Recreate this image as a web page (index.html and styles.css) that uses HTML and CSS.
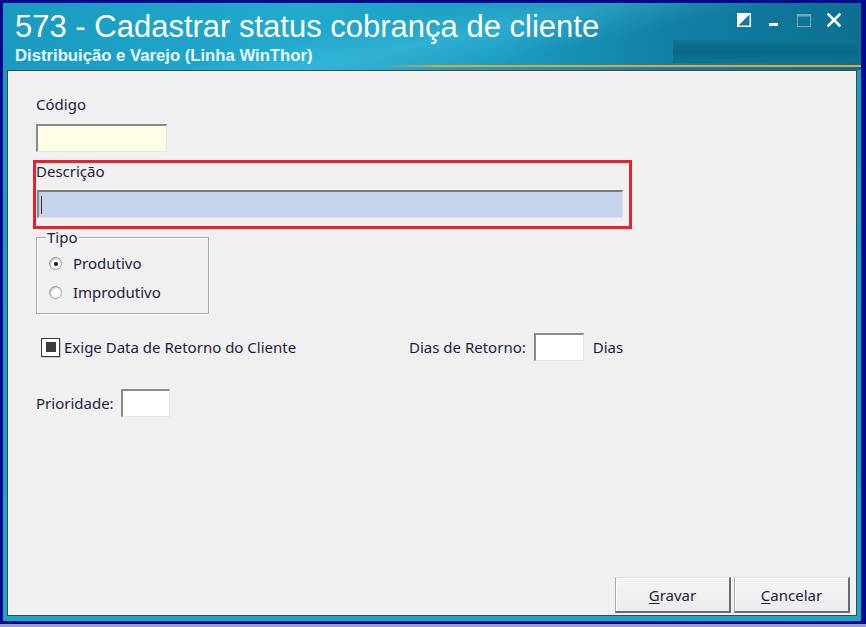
FILE: index.html
```html
<!DOCTYPE html>
<html lang="pt-BR">
<head>
  <meta charset="UTF-8" />
  <title>573 - Cadastrar status cobrança de cliente</title>
  <link rel="stylesheet" href="styles.css">
</head>
<body>

<div class="window">
  <header class="titlebar">
    <div class="titles">
      <h1>573 - Cadastrar status cobrança de cliente</h1>
      <div class="subtitle">Distribuição e Varejo (Linha WinThor)</div>
    </div>

    <div class="caption-buttons">
      <svg width="14" height="14" viewBox="0 0 14 14">
        <rect x="0.75" y="0.75" width="12.5" height="12.5" fill="none" stroke="#fff" stroke-width="1.5"/>
        <polygon points="0,0 14,0 0,14" fill="#fff"/>
      </svg>
      <svg width="14" height="14" viewBox="0 0 14 14">
        <rect x="2" y="10" width="9" height="3" fill="#fff"/>
      </svg>
      <svg width="14" height="14" viewBox="0 0 14 14">
        <rect x="0.5" y="1.5" width="13" height="12" fill="none" stroke="#7fa6b6" stroke-width="1"/>
        <rect x="0" y="1" width="14" height="2.5" fill="#7fa6b6"/>
      </svg>
      <svg width="14" height="14" viewBox="0 0 14 14">
        <path d="M1.5 1.5 L12.5 12.5 M12.5 1.5 L1.5 12.5" stroke="#fff" stroke-width="2.6" stroke-linecap="square"/>
      </svg>
    </div>

    <div class="title-shade"></div>
    <div class="title-line"></div>
  </header>

  <main class="panel">
    <div class="form">
      <label class="label">Código</label>
      <div class="field field-code"></div>

      <div class="highlight">
        <label class="label label-desc">Descrição</label>
        <div class="field field-desc"><span class="caret"></span></div>
      </div>

      <fieldset class="group">
        <legend>Tipo</legend>
        <div class="radio-row">
          <span class="radio checked"></span>
          <span>Produtivo</span>
        </div>
        <div class="radio-row">
          <span class="radio"></span>
          <span>Improdutivo</span>
        </div>
      </fieldset>

      <div class="row-return">
        <div class="check-row">
          <span class="check"></span>
          <span>Exige Data de Retorno do Cliente</span>
        </div>
        <div class="days">
          <span>Dias de Retorno:</span>
          <div class="field field-small"></div>
          <span>Dias</span>
        </div>
      </div>

      <div class="row-priority">
        <span>Prioridade:</span>
        <div class="field field-small"></div>
      </div>
    </div>

    <div class="actions">
      <button class="btn"><u>G</u>ravar</button>
      <button class="btn"><u>C</u>ancelar</button>
    </div>
  </main>
</div>

</body>
</html>
```

FILE: styles.css
```css
html {
  background: #9a9cc0;
}

body {
  margin: 0;
  height: 624px;
  padding-top: 3px;
  box-sizing: border-box;
  background: #010a8e;
  font-family: 'Noto Sans', 'Open Sans', sans-serif;
  font-size: 15px;
  color: #1c1c40;
  overflow: hidden;
}

.window {
  margin: 0 5px 0 3px;
  width: 858px;
  height: 618px;
  background: linear-gradient(180deg, #139fc0, #17a8c4);
  display: flex;
  flex-direction: column;
}

/* title bar */

.titlebar {
  position: relative;
  height: 67px;
  flex: none;
  display: flex;
  justify-content: space-between;
  background:
    linear-gradient(168deg, rgba(255,255,255,0) 40%, rgba(120,230,255,0.2) 52%, rgba(255,255,255,0) 66%),
    linear-gradient(90deg, #1a9ac1 0%, #22aacd 35%, #1a9dc2 58%, #127fa5 78%, #0c6f91 100%);
  color: #fff;
}

.titles {
  padding: 7px 0 0 12px;
  position: relative;
  z-index: 1;
}

h1 {
  margin: 0;
  font-family: 'Liberation Sans', Arial, sans-serif;
  font-weight: normal;
  font-size: 31px;
  line-height: 34px;
  white-space: nowrap;
}

.subtitle {
  margin-top: 3px;
  font-family: 'Liberation Sans', Arial, sans-serif;
  font-weight: bold;
  font-size: 16.7px;
  line-height: 18px;
  color: #e8f8ff;
}

.caption-buttons {
  display: flex;
  gap: 16px;
  padding: 10px 20px 0 0;
  align-items: flex-start;
  position: relative;
  z-index: 1;
}

.title-shade {
  position: absolute;
  left: 670px;
  top: 37px;
  width: 184px;
  height: 23px;
  background: linear-gradient(180deg, #0e7696, #0b6788 45%, #0e7393);
}

.title-line {
  position: absolute;
  left: 377px;
  right: 0;
  top: 62px;
  height: 2px;
  background: linear-gradient(90deg, rgba(240,160,40,0), #eea033 12%, #f2a42e);
}

/* client area */

.panel {
  flex: 1;
  margin: 0 4px 5px 4px;
  background: #f0f0f0;
  border: 1px solid #454545;
  box-shadow: inset 1px 1px 0 #ffffff;
  display: flex;
  flex-direction: column;
}

.form {
  flex: 1;
  padding: 25px 0 0 28px;
  display: flex;
  flex-direction: column;
  align-items: flex-start;
}

.label {
  display: block;
  line-height: 17px;
}

.field {
  box-sizing: border-box;
  height: 28px;
  background: #fff;
  border-top: 2px solid #8a8a8a;
  border-left: 2px solid #8a8a8a;
  border-bottom: 1px solid #e4e4e4;
  border-right: 1px solid #e4e4e4;
}

.field-code {
  margin-top: 11px;
  width: 131px;
  background: #fefee4;
}

.highlight {
  margin: 8px 0 0 -3px;
  width: 599px;
  box-sizing: border-box;
  border: 3px solid #e8202c;
  padding: 0 6px 8px 1px;
}

.label-desc {
  margin-left: -1px;
}

.field-desc {
  margin-top: 10px;
  width: 586px;
  background: #c5d3ed;
  border-top-color: #7a7a7a;
  display: flex;
  align-items: center;
  padding-left: 2px;
}

.caret {
  width: 1px;
  height: 18px;
  background: #333;
}

/* Tipo group */

.group {
  margin: 0;
  width: 173px;
  box-sizing: border-box;
  padding: 0 0 12px 12px;
  border: 1px solid #a8a8a8;
  box-shadow: inset 1px 1px 0 #fff, 1px 1px 0 #fff;
}

.group legend {
  padding: 0 1px;
  margin-left: -3px;
  line-height: 17px;
}

.radio-row {
  display: flex;
  align-items: center;
  gap: 11px;
  line-height: 17px;
  margin-top: 9px;
}

.radio-row + .radio-row {
  margin-top: 12px;
}

.radio {
  width: 13px;
  height: 13px;
  box-sizing: border-box;
  border-radius: 50%;
  border: 1px solid #9a9a9a;
  background: radial-gradient(circle at 60% 60%, #fff 55%, #e8e8e8);
  box-shadow: inset 1px 1px 1px rgba(0,0,0,0.25);
  display: flex;
  align-items: center;
  justify-content: center;
}

.radio.checked::after {
  content: "";
  width: 4px;
  height: 4px;
  border-radius: 50%;
  background: #111;
}

/* retorno / prioridade */

.row-return {
  margin-top: 19px;
  height: 28px;
  display: grid;
  grid-template-columns: 368px auto;
  align-items: center;
  padding-left: 5px;
}

.check-row {
  display: flex;
  align-items: center;
  gap: 4px;
}

.check {
  width: 19px;
  height: 19px;
  box-sizing: border-box;
  border: 1px solid #3a3a3a;
  background: #fff;
  box-shadow: 1px 1px 0 #c8c8c8;
  display: flex;
  align-items: center;
  justify-content: center;
}

.check::after {
  content: "";
  width: 10px;
  height: 10px;
  background: #3c3c3c;
}

.days {
  display: flex;
  align-items: center;
}

.field-small {
  width: 49px;
}

.days .field-small {
  width: 50px;
  margin: 0 9px 0 8px;
}

.row-priority {
  margin-top: 28px;
  display: flex;
  align-items: center;
  gap: 7px;
}

/* buttons */

.actions {
  display: flex;
  justify-content: flex-end;
  gap: 3px;
  padding: 0 6px 2px 0;
}

.btn {
  width: 116px;
  height: 36px;
  font: inherit;
  color: #1c1c40;
  background: linear-gradient(180deg, #f4f4f4, #ececec);
  border-top: 1px solid #e0e0e0;
  border-left: 1px solid #a8a8a8;
  border-right: 2px solid #6a6a6a;
  border-bottom: 2px solid #6a6a6a;
  box-shadow: inset 1px 1px 0 #ffffff;
  padding: 0;
  cursor: pointer;
}

.btn u {
  text-underline-offset: 2px;
}
```
